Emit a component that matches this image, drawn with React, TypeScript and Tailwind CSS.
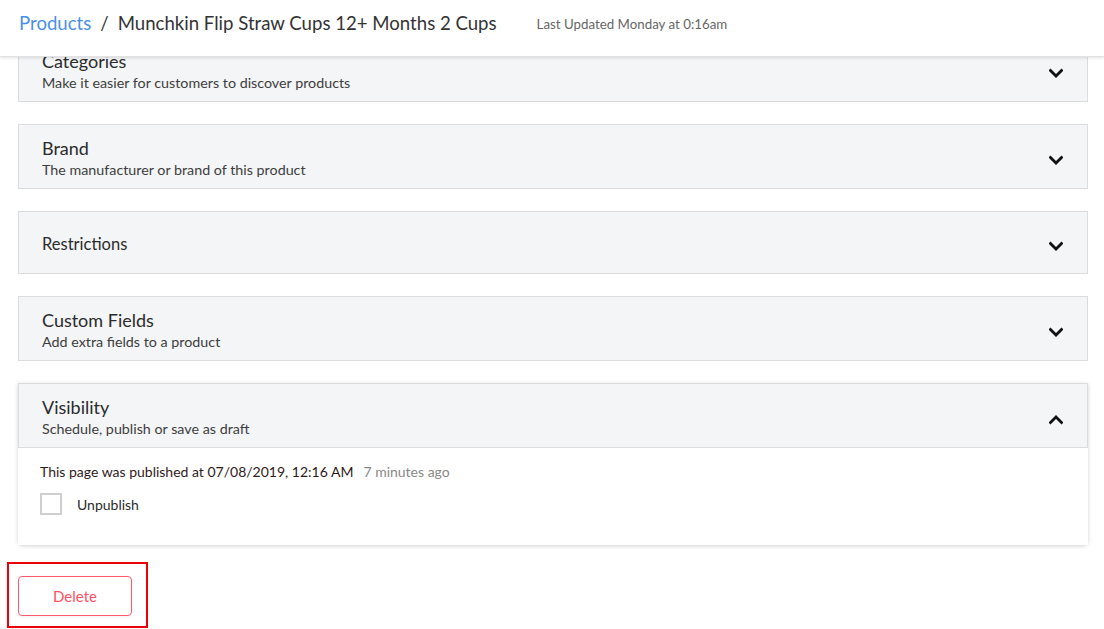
import React from 'react';

const font = { fontFamily: 'Lato, "Open Sans", sans-serif' };

function Chevron({ up = false }: { up?: boolean }) {
  return (
    <svg width="14" height="10" viewBox="0 0 14 10" aria-hidden="true" className={up ? 'mt-[6px] rotate-180' : 'mt-[4px]'}>
      <path d="M1.5 2.5 L7 8 L12.5 2.5" fill="none" stroke="#111" strokeWidth="2.8" strokeLinecap="square" />
    </svg>
  );
}

function Section({ title, subtitle, open = false }: { title: string; subtitle?: string; open?: boolean }) {
  return (
    <div
      className={`flex items-center justify-between border border-[#dcdcdc] bg-[#f4f5f7] pl-[23px] pr-[24px] pt-[3px] ${
        subtitle ? 'h-[65px]' : 'h-[63px]'
      }`}
    >
      <div className="flex flex-col">
        <span className={`${subtitle ? 'text-[18px]' : 'text-[16.5px]'} leading-[22px] text-[#2b2b2b]`}>{title}</span>
        {subtitle && <span className="mt-[1px] text-[14.3px] leading-[20px] text-[#3d3d3d]">{subtitle}</span>}
      </div>
      <Chevron up={open} />
    </div>
  );
}

export default function App() {
  return (
    <div className="flex h-[629px] w-[1104px] flex-col overflow-hidden bg-white" style={font}>
      {/* Header */}
      <header className="relative z-10 flex h-[57px] shrink-0 items-start border-b border-[#e2e2e2] bg-white pl-[19px] pt-[11px] shadow-[0_1px_3px_rgba(0,0,0,0.12)]">
        <span className="text-[18.6px] leading-[24px] text-[#4a8fe7]">Products</span>
        <span className="mx-[9px] text-[18.6px] leading-[24px] text-[#333]">/</span>
        <span className="text-[18.6px] leading-[24px] text-[#333]">Munchkin Flip Straw Cups 12+ Months 2 Cups</span>
        <span className="ml-[40px] mt-[4px] text-[13.3px] leading-[18px] text-[#666]">Last Updated Monday at 0:16am</span>
      </header>

      {/* Scrolled content */}
      <div className="min-h-0 flex-1 overflow-hidden">
        <div className="-mt-[20px] flex flex-col gap-[22px] pl-[18px] pr-[16px]">
          <Section title="Categories" subtitle="Make it easier for customers to discover products" />
          <Section title="Brand" subtitle="The manufacturer or brand of this product" />
          <Section title="Restrictions" />
          <Section title="Custom Fields" subtitle="Add extra fields to a product" />

          <div className="rounded-b-[5px] shadow-[0_1px_4px_rgba(0,0,0,0.18)]">
            <Section title="Visibility" subtitle="Schedule, publish or save as draft" open />
            <div className="h-[97px] bg-white pl-[22px] pt-[15px]">
              <p className="text-[14px] leading-[18px] text-[#2e1a1a]">
                This page was published at 07/08/2019, 12:16 AM
                <span className="ml-[10px] text-[#888]">7 minutes ago</span>
              </p>
              <label className="mt-[12px] flex items-center">
                <span className="h-[22px] w-[22px] border-2 border-[#cfcfcf] bg-white" />
                <span className="ml-[15px] text-[14px] text-[#2b2b2b]">Unpublish</span>
              </label>
            </div>
          </div>

          <div className="-ml-[11px] -mt-[5px] w-[141px] border-2 border-[#e8000b] pb-[10px] pl-[9px] pt-[12px]">
            <button className="h-[40px] w-[114px] rounded-[4px] border border-[#ff5a6b] bg-white text-[15px] text-[#ff5061] shadow-[0_1px_4px_rgba(0,0,0,0.06)]">
              Delete
            </button>
          </div>
        </div>
      </div>
    </div>
  );
}
